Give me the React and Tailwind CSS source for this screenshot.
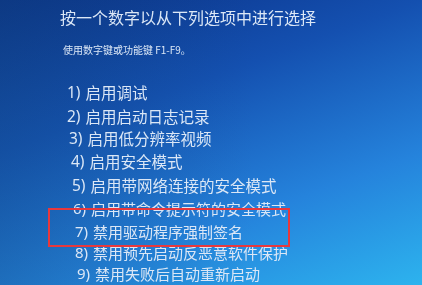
const items = [
  { n: "1)", t: "启用调试", ml: "ml-[67px]", h: "h-[24px]", fs: "text-[15.5px]" },
  { n: "2)", t: "启用启动日志记录", ml: "ml-[67px]", h: "h-[23px]", fs: "text-[15.5px]" },
  { n: "3)", t: "启用低分辨率视频", ml: "ml-[69px]", h: "h-[22px]", fs: "text-[15.5px]" },
  { n: "4)", t: "启用安全模式", ml: "ml-[71px]", h: "h-[24px]", fs: "text-[15.5px]" },
  { n: "5)", t: "启用带网络连接的安全模式", ml: "ml-[72px]", h: "h-[23px]", fs: "text-[15.5px]" },
  { n: "6)", t: "启用带命令提示符的安全模式", ml: "ml-[73px]", h: "h-[23px]", fs: "text-[15px]" },
  { n: "7)", t: "禁用驱动程序强制签名", ml: "ml-[75px]", h: "h-[22px]", fs: "text-[15px]" },
  { n: "8)", t: "禁用预先启动反恶意软件保护", ml: "ml-[75px]", h: "h-[21px]", fs: "text-[15px]" },
  { n: "9)", t: "禁用失败后自动重新启动", ml: "ml-[77px]", h: "h-[20px]", fs: "text-[15px]" },
];

export default function App() {
  return (
    <div
      className="relative w-[422px] h-[285px] overflow-hidden bg-[linear-gradient(160deg,#0a2f84_0%,#1450b0_35%,#2583dc_70%,#2db3ee_100%)] text-[#dbe7f6]"
      style={{ fontFamily: '"Noto Sans CJK SC", "Noto Sans", sans-serif' }}
    >
      <div className="absolute inset-0 bg-[linear-gradient(90deg,rgba(20,80,130,0.3)_0%,rgba(20,80,130,0)_60%)]" />
      <div className="relative flex flex-col blur-[0.3px]">
        <div className="ml-[60px] mt-[6px] h-[22px] text-[16px] leading-[22px]">
          按一个数字以从下列选项中进行选择
        </div>
        <div className="ml-[63px] mt-[15px] h-[14px] text-[10px] leading-[14px]">
          使用数字键或功能键 F1-F9。
        </div>
        <div className="mt-[24px] flex flex-col">
          {items.map((it) => (
            <div
              key={it.n}
              className={`${it.ml} ${it.h} ${it.fs} flex items-center leading-none whitespace-nowrap`}
            >
              <span style={{ fontFamily: '"Noto Sans", sans-serif' }}>{it.n}</span>
              <span className="ml-[5px]">{it.t}</span>
            </div>
          ))}
        </div>
      </div>
      <div className="absolute left-[48px] top-[208px] w-[242px] h-[39px] border-[2.5px] border-[#e8383c]" />
    </div>
  );
}
